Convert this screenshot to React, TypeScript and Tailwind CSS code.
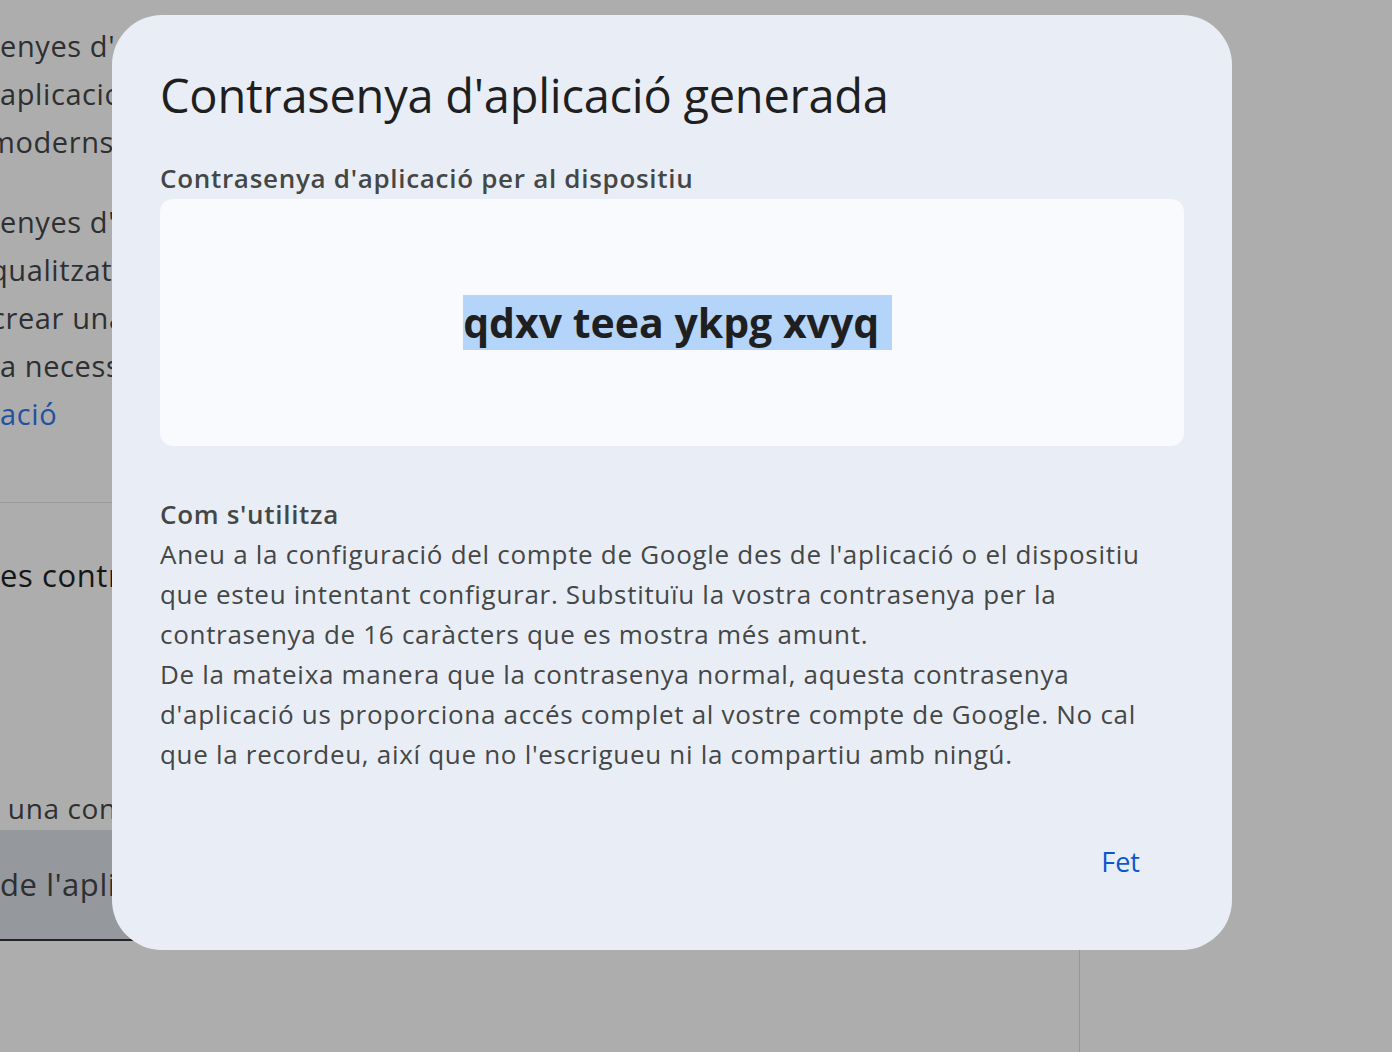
import React from 'react';

const font = { fontFamily: '"Open Sans", Roboto, sans-serif' };

const BackgroundPage: React.FC = () => (
  <div className="flex flex-col h-full">
    <div className="h-[950px] w-[240px] overflow-hidden whitespace-nowrap text-[29px] tracking-[0.6px] text-[#2e2f30]">
      <div className="mt-[22px] leading-[48px]">
        <div>enyes d'aplicació</div>
        <div>aplicacions</div>
        <div className="-ml-[12px]">moderns.</div>
      </div>
      <div className="mt-[32px] leading-[48px]">
        <div>enyes d'aplicació</div>
        <div className="-ml-[10px]">qualitzats</div>
        <div className="-ml-[9px]">crear una</div>
        <div>a necessitat</div>
        <div className="text-[#24509f]">ació</div>
      </div>
      <div className="mt-[64px] h-px bg-[#9a9a9a]" />
      <div className="mt-[48px] leading-[48px] text-[31px] font-medium text-[#161616]">es contrasenyes</div>
      <div className="mt-[189px] leading-[40px] text-[28px]">&nbsp;una contrasenya</div>
      <div className="mt-[2px] h-[111px] w-[140px] bg-[#95989c] border-b-2 border-[#232323] flex items-center">
        <span className="text-[31px]">de l'aplicació</span>
      </div>
    </div>
    <div className="flex-1 w-[1080px] border-r border-[#979797]" />
  </div>
);

const Dialog: React.FC = () => (
  <div
    className="absolute left-[112px] top-[15px] w-[1120px] h-[935px] rounded-[50px] bg-[#e9eef6] px-[48px] pt-[52px]"
    style={font}
  >
    <h1 className="text-[47px] leading-[56px] text-[#1f1f1f] font-normal tracking-[-0.25px]">
      Contrasenya d'aplicació generada
    </h1>
    <div className="mt-[35px] text-[26px] leading-[40px] font-semibold tracking-[0.7px] text-[#444746]">
      Contrasenya d'aplicació per al dispositiu
    </div>
    <div className="mt-[1px] h-[247px] rounded-[13px] bg-[#f8fafd] flex items-center justify-center pl-[11px]">
      <span className="text-[41px] leading-[55px] font-bold text-[#1f1f1f] bg-[#b5d4fa] pr-[2px]">
        qdxv teea ykpg xvyq&nbsp;
      </span>
    </div>
    <div className="mt-[48px] text-[26px] leading-[40px] font-semibold tracking-[0.7px] text-[#444746]">
      Com s'utilitza
    </div>
    <div className="text-[26px] leading-[40px] tracking-[0.7px] text-[#444746] whitespace-nowrap">
      <p>Aneu a la configuració del compte de Google des de l'aplicació o el dispositiu</p>
      <p>que esteu intentant configurar. Substituïu la vostra contrasenya per la</p>
      <p>contrasenya de 16 caràcters que es mostra més amunt.</p>
      <p>De la mateixa manera que la contrasenya normal, aquesta contrasenya</p>
      <p>d'aplicació us proporciona accés complet al vostre compte de Google. No cal</p>
      <p>que la recordeu, així que no l'escrigueu ni la compartiu amb ningú.</p>
    </div>
    <div className="mt-[68px] flex justify-end pr-[20px]">
      <button className="h-[40px] px-[24px] text-[27px] leading-[40px] font-medium text-[#0b57d0]">Fet</button>
    </div>
  </div>
);

export default function App() {
  return (
    <div className="relative w-[1392px] h-[1052px] overflow-hidden bg-[#adadad]" style={font}>
      <BackgroundPage />
      <Dialog />
    </div>
  );
}
